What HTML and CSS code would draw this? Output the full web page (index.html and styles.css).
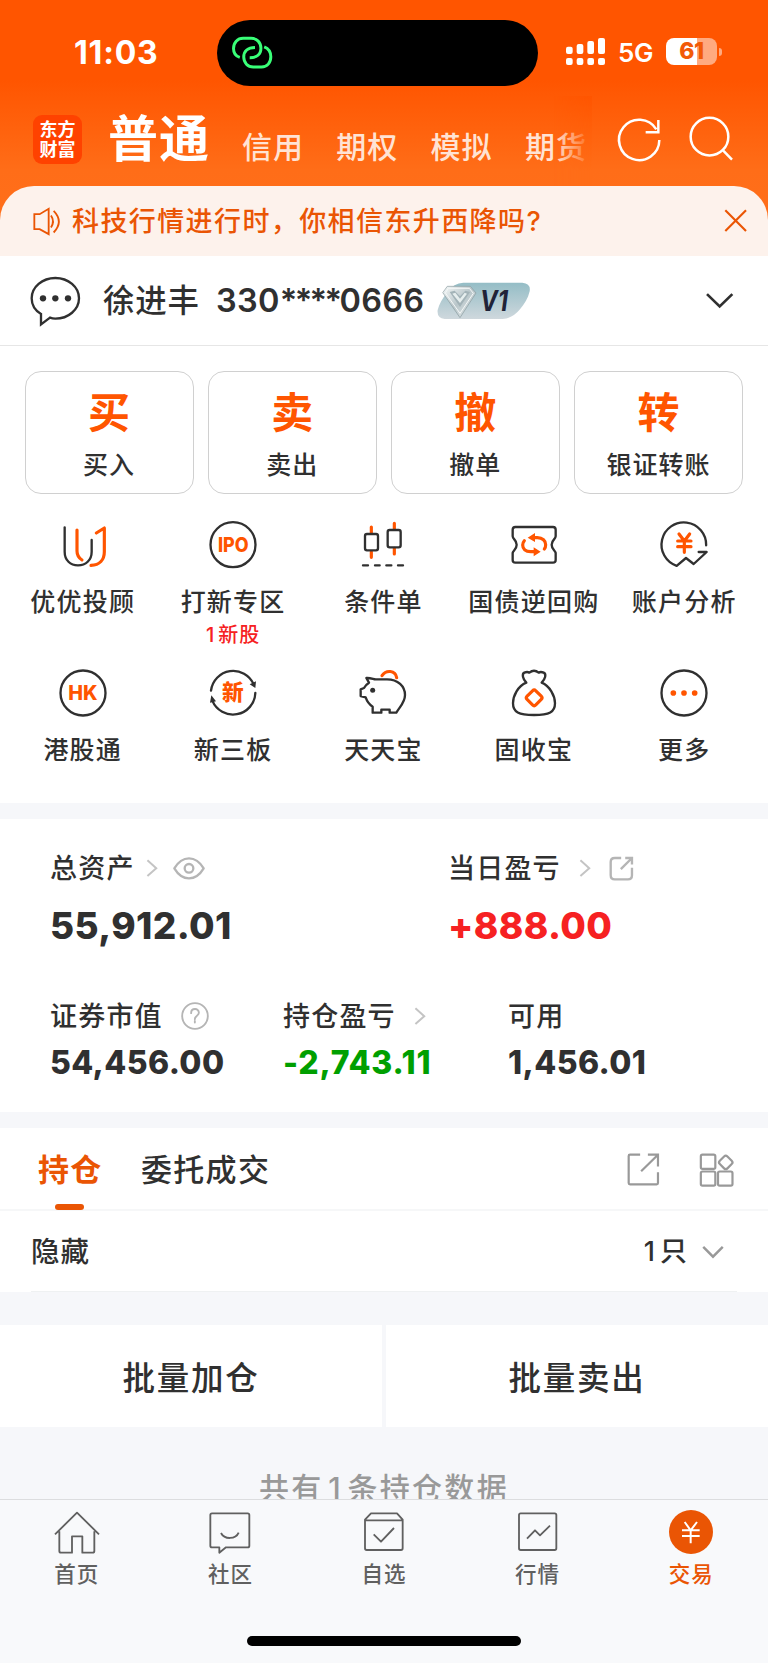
FILE: index.html
```html
<!DOCTYPE html>
<html lang="zh-CN">
<head>
<meta charset="utf-8">
<title>交易</title>
<link rel="stylesheet" href="styles.css">
</head>
<body>
<header class="header">
  <div class="status">
    <span class="time">11:03</span>
    <div class="island">
      <svg class="link-icon" viewBox="692 109 126 100"><path d="M718 174C705 170 699 160 699 147C699 129 711 116 728 116H752C770 116 782 129 782 146C782 164 770 175 748 175M792 142C805 147 812 158 812 172C812 190 801 203 784 203H759C742 203 730 190 730 173C730 155 742 144 764 144"/></svg>
    </div>
    <svg class="signal" viewBox="546 114 117 81">
      <rect x="546" y="174" width="20" height="21" rx="6"/><rect x="578" y="174" width="20" height="21" rx="6"/><rect x="610" y="174" width="20" height="21" rx="6"/><rect x="642" y="174" width="21" height="21" rx="6"/>
      <rect x="546" y="140" width="20" height="22" rx="6"/><rect x="578" y="132" width="20" height="30" rx="6"/><rect x="610" y="123" width="20" height="39" rx="6"/><rect x="642" y="114" width="21" height="48" rx="6"/>
    </svg>
    <span class="net">5G</span>
    <div class="battery">61</div>
    <i class="nub"></i>
  </div>
  <nav class="nav">
    <div class="logo"><span>东方</span><span>财富</span></div>
    <div class="modes">
      <span class="mode-on">普通</span><span>信用</span><span>期权</span><span>模拟</span><span>期货</span>
    </div>
    <svg class="reload" viewBox="699 348 135 141"><path d="M826 420A60.500 60.500 0 1 1 817 388M823 360V397H785"/></svg>
    <svg class="search" viewBox="915 348 135 141"><circle cx="976.500" cy="410" r="56.500"/><path d="M1017 451L1044 479"/></svg>
  </nav>
  <div class="notice">
    <svg class="speaker" viewBox="99 621 84 86"><path d="M103 642H119L146 626V702L119 687H103ZM153 646Q165 664 153 682M161 632Q192 664 161 697"/></svg>
    <span class="notice-text">科技行情进行时，你相信东升西降吗?</span>
    <svg class="close" viewBox="1021 627 70 70"><path d="M1025 631L1088 694M1088 631L1025 694"/></svg>
  </div>
</header>

<section class="account">
  <svg class="chat" viewBox="90 62 150 150"><path d="M150 187L123 207V176C104 165 95 148 95 129C95 95 127 68 166 68S237 95 237 129S205 190 166 190C160 190 155 189 150 187Z"/><g class="dots"><circle cx="129" cy="129" r="9.500"/><circle cx="166" cy="129" r="9.500"/><circle cx="204" cy="129" r="9.500"/></g></svg>
  <span class="name">徐进丰</span>
  <span class="number">330<span class="stars">****</span>0666</span>
  <svg class="badge" viewBox="159 82 279 114">
    <defs>
      <linearGradient id="plate" x1="0" y1="0" x2="0" y2="1"><stop offset="0" stop-color="#94bdc6"/><stop offset="1" stop-color="#cfd8dd"/></linearGradient>
      <linearGradient id="gem" x1="0" y1="0" x2="1" y2="1"><stop offset="0" stop-color="#f5f8f8"/><stop offset=".5" stop-color="#b9c6ca"/><stop offset="1" stop-color="#e8eeee"/></linearGradient>
    </defs>
    <path fill="url(#plate)" d="M238 84H415Q441 86 437 110C432 132 421 148 408 164Q386 191 356 193H182Q158 190 161 166C166 148 175 132 188 115Q210 84 238 84Z"/>
    <path fill="url(#gem)" stroke="#87989d" stroke-width="2" d="M191 95H259L276 115L228 189L177 115Z"/>
    <path fill="none" stroke="#f4f7f7" stroke-width="3" d="M194 101H256L268 116L228 176L185 116Z"/>
    <path fill="#a3b3b8" d="M197 112L212 108L228 125L244 108L258 112L228 157Z"/>
    <path fill="#e6eeee" d="M205 117L214 114L228 132L242 114L249 117L228 145Z"/>
    <text x="288" y="168" class="badge-text" textLength="84" lengthAdjust="spacingAndGlyphs">V1</text>
  </svg>
  <svg class="chevron" viewBox="965 112 87 50"><path d="M971 118L1009 155L1047 118"/></svg>
</section>

<section class="trade">
  <div class="card"><b>买</b><span>买入</span></div>
  <div class="card"><b>卖</b><span>卖出</span></div>
  <div class="card"><b>撤</b><span>撤单</span></div>
  <div class="card"><b>转</b><span>银证转账</span></div>
</section>

<section class="tools">
  <div class="tool">
    <svg viewBox="0 0 144 144"><path d="M17 19V92C17 118 34 133 57 133S98 118 98 92V57"/><path class="hot" d="M54 27V90C54 104 61 112 69 117M112 36L136 21V92C136 116 122 132 96 133"/></svg>
    <span>优优投顾</span>
  </div>
  <div class="tool">
    <svg viewBox="0 0 144 144"><circle cx="72" cy="71" r="67.500"/><text x="27" y="93" textLength="92" lengthAdjust="spacingAndGlyphs">IPO</text></svg>
    <span>打新专区</span><em>1<i></i>新股</em>
  </div>
  <div class="tool">
    <svg viewBox="0 0 144 144"><path class="hot" d="M37 18V36M37 92V109M106 7V24M106 82V99"/><rect x="18" y="39" width="39" height="49" rx="6"/><rect x="86" y="27" width="39" height="52" rx="6"/><path d="M12 133H27M48 133H62M82 133H97M117 133H132"/></svg>
    <span>条件单</span>
  </div>
  <div class="tool">
    <svg viewBox="0 0 144 144"><path d="M16 18H129Q137 18 137 26V46C137 55 125 56 125 71C125 86 137 88 137 97V117Q137 125 129 125H16Q8 125 8 117V97C8 88 20 86 20 71C20 56 8 55 8 46V26Q8 18 16 18Z"/><path class="hot thick" d="M70 50H82C98 50 107 60 107 71Q107 79 103 84M43 59Q38 65 38 72C38 83 46 92 62 92H74"/><path class="fill" d="M53 50L75 36V63ZM92 92L71 79V106Z"/></svg>
    <span>国债逆回购</span>
  </div>
  <div class="tool">
    <svg viewBox="0 0 144 144"><path d="M138.500 73A67 67 0 1 0 50 134.500L78 111L101 129L140 93H116"/><path class="hot thick" d="M57 39L73 60L89 39M73 60V94M53 60H93M53 77H93"/></svg>
    <span>账户分析</span>
  </div>
  <div class="tool">
    <svg viewBox="0 0 144 144"><circle cx="72" cy="72" r="67.500"/><text x="28" y="94" textLength="88" lengthAdjust="spacingAndGlyphs">HK</text></svg>
    <span>港股通</span>
  </div>
  <div class="tool">
    <svg viewBox="0 0 144 144"><path d="M6 65A67 67 0 0 1 134 46M139 72A67 67 0 0 1 10 95"/><path class="dark" d="M122 46L141 37L139 57ZM3 101L7 79L21 97Z"/><text class="cjk" x="39" y="94">新</text></svg>
    <span>新三板</span>
  </div>
  <div class="tool">
    <svg viewBox="0 0 144 144"><path d="M22 27C34 26 42 30 50 31H84C117 31 138 52 138 78C138 100 124 111 112 131H92V122H67V131H41V113Q26 103 20 85L5 81V61L15 57Q19 48 30 41Z"/><circle class="dark" cx="41" cy="64" r="7.500"/><path class="hot thick" d="M69 20C81 2 109 3 113 26"/></svg>
    <span>天天宝</span>
  </div>
  <div class="tool">
    <svg viewBox="0 0 144 144"><path d="M49 41C38 30 35 15 43 11Q52 7 58 11Q72 -1 86 11Q92 7 101 11C110 15 106 30 95 41C119 51 135 80 135 103C135 130 118 138 72 138S9 130 9 103C9 80 24 51 49 41Z"/><rect class="hot thick" x="54" y="68" width="37" height="37" rx="7" transform="rotate(45 72.500 86.500)"/></svg>
    <span>固收宝</span>
  </div>
  <div class="tool">
    <svg viewBox="0 0 144 144"><circle cx="72" cy="72" r="67.500"/><g class="fill"><circle cx="40" cy="72" r="8.500"/><circle cx="72" cy="72" r="8.500"/><circle cx="104" cy="72" r="8.500"/></g></svg>
    <span>更多</span>
  </div>
</section>

<section class="assets">
  <div class="top-row">
    <div class="cell">
      <div class="label">总资产
        <svg class="gt" viewBox="437 207 36 55"><path d="M441 211L468 235L441 259"/></svg>
        <svg class="eye" viewBox="517 201 96 69"><path d="M521 235C545 195 585 195 609 235C585 275 545 275 521 235Z"/><circle cx="565" cy="235" r="13"/></svg>
      </div>
      <div class="big">55,912.01</div>
    </div>
    <div class="cell">
      <div class="label">当日盈亏
        <svg class="gt gt-wide" viewBox="437 207 36 55"><path d="M441 211L468 235L441 259"/></svg>
        <svg class="share" viewBox="677 201 74 74"><path d="M713 207H694Q682 207 682 219V258Q682 270 694 270H733Q745 270 745 258V236M712 240L745 207M725 207H745V226"/></svg>
      </div>
      <div class="big up">+888.00</div>
    </div>
  </div>
  <div class="bottom-row">
    <div class="cell">
      <div class="label">证券市值
        <svg class="help" viewBox="543 636 83 83"><circle cx="584.500" cy="677.500" r="38"/><path d="M573 669C573 653 596 653 596 668C596 677 584 676 584 687M584 692V697"/></svg>
      </div>
      <div class="mid">54,456.00</div>
    </div>
    <div class="cell">
      <div class="label">持仓盈亏
        <svg class="gt gt-wide" viewBox="437 207 36 55"><path d="M441 211L468 235L441 259"/></svg>
      </div>
      <div class="mid down">-2,743.11</div>
    </div>
    <div class="cell">
      <div class="label">可用</div>
      <div class="mid">1,456.01</div>
    </div>
  </div>
</section>

<section class="holdings">
  <div class="tabs">
    <span class="tab tab-on">持仓</span>
    <span class="tab">委托成交</span>
    <svg class="export" viewBox="729 159 98 98"><path d="M768 164H738Q734 164 734 168V248Q734 252 738 252H817Q821 252 821 248V216M771 213L821 164M791 164H821V199"/></svg>
    <svg class="grid-icon" viewBox="946 159 106 101"><rect x="951" y="164" width="43" height="42" rx="5"/><rect x="951" y="214" width="43" height="42" rx="5"/><rect x="1002" y="214" width="43" height="42" rx="5"/><rect x="1009" y="171" width="32" height="32" rx="7" transform="rotate(45 1025 187)"/></svg>
  </div>
  <div class="hidden-row">
    <span>隐藏</span>
    <span class="count">1<i></i>只</span>
    <svg class="fold" viewBox="950 434 72 43"><path d="M956 440L986 470L1016 440"/></svg>
  </div>
</section>

<section class="batch">
  <div>批量加仓</div>
  <div>批量卖出</div>
</section>
<div class="summary">共有<i></i>1<i></i>条持仓数据</div>

<footer class="tabbar">
  <div class="items">
    <div class="item"><svg viewBox="0 0 144 144"><path d="M6 79L72 14L138 79M19 70V129Q19 134 24 134H57V85H88V134H119Q124 134 124 129V70"/></svg><span>首页</span></div>
    <div class="item"><svg viewBox="0 0 144 144"><path d="M18 16H125Q130 16 130 21V113Q130 118 125 118H60L40 134V118H18Q13 118 13 113V21Q13 16 18 16ZM45 75C55 95 89 95 98 74"/></svg><span>社区</span></div>
    <div class="item"><svg viewBox="0 0 144 144"><path d="M33 16H111L128 35V121Q128 126 123 126H20Q15 126 15 121V35ZM15 37H128M41 79L63 101L102 60"/></svg><span>自选</span></div>
    <div class="item"><svg viewBox="0 0 144 144"><path d="M20 16H122Q127 16 127 21V121Q127 126 122 126H20Q15 126 15 121V21Q15 16 20 16ZM39 92L63 67L78 82L108 53"/></svg><span>行情</span></div>
    <div class="item item-on"><svg viewBox="0 0 144 144"><circle cx="72" cy="72" r="66"/><path d="M53 42L71 67L90 42M71 67V106M45 67H98M45 84H98"/></svg><span>交易</span></div>
  </div>
  <div class="home"></div>
</footer>
</body>
</html>
```
FILE: styles.css
```css
* { box-sizing: border-box; }
body {
  margin: 0;
  width: 768px;
  height: 1663px;
  overflow: hidden;
  display: flex;
  flex-direction: column;
  background: #f6f7fa;
  color: #303030;
  font-family: Inter, "Noto Sans CJK SC", sans-serif;
  font-weight: 500;
}
svg { display: block; flex: none; fill: none; overflow: visible; stroke-linecap: round; stroke-linejoin: round; }
span, b, em { white-space: nowrap; }

.header { flex: none; height: 256px; background: linear-gradient(#ff5500 0, #ff5500 80px, #ff6d18 170px, #ff701c 256px); }
.status { display: flex; align-items: center; height: 106px; color: #fff; }
.time { flex: none; width: 217px; margin-top: -2px; padding-left: 74px; font-size: 32px; font-weight: 700; letter-spacing: .8px; }
.island { flex: none; width: 321px; height: 66px; border-radius: 33px; background: #000; padding: 16px 14px; }
.link-icon { width: 42px; height: 33px; stroke: #39ff78; stroke-width: 9; stroke-linecap: butt; }
.signal { width: 39px; height: 27px; margin: -3px 0 0 28px; fill: #fff; }
.net { flex: none; width: 61px; margin-top: -1px; padding-left: 13px; font-size: 26px; font-weight: 600; letter-spacing: -.3px; }
.battery { flex: none; width: 51px; height: 27px; margin-top: -3px; border-radius: 8px; background: linear-gradient(90deg, #fff 61%, #ffaa80 61%); color: #f25a08; font-size: 23px; line-height: 27px; font-weight: 800; text-align: center; letter-spacing: -.5px; }
.nub { flex: none; width: 3px; height: 8px; margin: -3px 0 0 2px; border-radius: 0 4px 4px 0; background: #ffaa80; }

.nav { display: flex; align-items: center; height: 80px; padding-left: 33px; }
.logo { width: 49px; height: 49px; margin-top: -13px; border-radius: 9px; background: #ff4200; color: #fff; display: flex; flex-direction: column; align-items: center; justify-content: center; font-size: 18px; line-height: 20px; font-weight: 700; }
.modes { position: relative; display: flex; width: 510px; height: 90px; padding-left: 26px; margin-top: -10px; overflow: hidden; font-size: 30px; line-height: 102px; letter-spacing: 1px; color: #ffe3d4; }
.modes span { width: 94.300px; flex: none; }
.modes .mode-on { width: 134px; font-size: 50px; line-height: 87px; font-weight: 700; color: #fff; }
.modes::after { content: ""; position: absolute; right: 0; top: 0; width: 38px; height: 90px; background: linear-gradient(#ff5500, #ff6d18 75px); -webkit-mask-image: linear-gradient(90deg, transparent, #000); mask-image: linear-gradient(90deg, transparent, #000); }
.reload, .search { width: 45px; height: 47px; margin-top: -13px; stroke: #fff; stroke-width: 7.500; stroke-linecap: butt; stroke-linejoin: miter; }
.reload { margin-left: 25px; }
.search { margin-left: 27px; }
.notice { display: flex; align-items: center; height: 70px; padding: 2px 21px 0 33px; border-radius: 34px 34px 0 0; background: #fdf2ec; color: #ea5504; }
.speaker { width: 28px; height: 29px; margin-top: -2px; stroke: #ea5504; stroke-width: 5.500; stroke-linecap: butt; stroke-linejoin: miter; }
.notice-text { margin-left: 11px; flex: 1; font-size: 27px; letter-spacing: 1.4px; line-height: 40px; }
.close { width: 23px; height: 23px; margin-top: -3px; stroke: #ea5504; stroke-width: 6.500; stroke-linecap: butt; }

.account { flex: none; display: flex; align-items: center; height: 90px; padding-left: 30px; border-bottom: 1px solid #e6e6e6; background: #fff; }
.chat { width: 50px; height: 50px; stroke: #303030; stroke-width: 7; stroke-linejoin: miter; }
.dots { fill: #303030; stroke: none; }
.name { margin-left: 23px; width: 113px; font-size: 31.500px; letter-spacing: .8px; line-height: 44px; }
.number { width: 221px; font-size: 32.500px; line-height: 44px; letter-spacing: .3px; font-weight: 600; }
.stars { letter-spacing: -2.600px; }
.badge { width: 93px; height: 38px; }
.badge-text { font: italic 700 84px Inter, sans-serif; fill: #1f2338; }
.chevron { width: 29px; height: 17px; margin-left: 175px; stroke: #303030; stroke-width: 8; stroke-linecap: butt; stroke-linejoin: miter; }

.trade { flex: none; display: grid; grid-template-columns: repeat(4, 1fr); gap: 14px; height: 148px; padding: 25px 25px 0 24.500px; background: #fff; }
.card { height: 123px; border: 1px solid #d0d0d0; border-radius: 16px; display: flex; flex-direction: column; align-items: center; }
.card b { margin-top: 15px; font-size: 42px; line-height: 52px; font-weight: 700; color: #ff5500; }
.card span { margin-top: 8px; font-size: 25px; line-height: 36px; letter-spacing: 1px; }

.tools { flex: none; display: grid; grid-template-columns: repeat(5, 150.400px); grid-template-rows: 147.500px 1fr; height: 309px; padding: 27px 8px 0 7.500px; background: #fff; }
.tool { display: flex; flex-direction: column; align-items: center; font-size: 25px; line-height: 36px; letter-spacing: 1.200px; }
.tool svg { width: 48px; height: 48px; stroke: #303030; stroke-width: 7; }
.tool span { margin-top: 15px; }
.tool em { font-size: 20px; line-height: 28px; font-style: normal; color: #f62122; margin-top: 1px; letter-spacing: 1px; }
.tool em i { display: inline-block; width: 3px; }
.tool .hot { stroke: #ff5500; stroke-width: 9.500; }
.tool .thick { stroke-width: 9.500; }
.tool .fill { fill: #ff5500; stroke: none; }
.tool .dark { fill: #303030; stroke: none; }
.tool text { font: 800 60px Inter, sans-serif; fill: #ff5500; stroke: none; letter-spacing: 0; }
.tool .cjk { font: 900 65px "Noto Sans CJK SC", sans-serif; }

.assets { flex: none; margin: 16px 0; height: 293px; padding: 30px 0 0 50px; background: #fff; }
.top-row { display: grid; grid-template-columns: 398px 1fr; height: 148px; }
.bottom-row { display: grid; grid-template-columns: 233px 225px 1fr; }
.label { display: flex; align-items: center; font-size: 27px; line-height: 40px; letter-spacing: 1.200px; }
.label svg { margin-top: -2px; }
.gt { width: 12px; height: 18px; margin-left: 11px; stroke: #c4c4c4; stroke-width: 6; stroke-linecap: butt; stroke-linejoin: miter; }
.gt-wide { margin-left: 18px; }
.eye { width: 32px; height: 23px; margin-left: 15px; stroke: #b5b5b5; stroke-width: 7; }
.share { width: 25px; height: 25px; margin-left: 18px; stroke: #b5b5b5; stroke-width: 7; stroke-linecap: butt; stroke-linejoin: miter; }
.help { width: 28px; height: 28px; margin-left: 18px; stroke: #b5b5b5; stroke-width: 5.500; }
.big { margin-top: 14px; font-size: 37px; line-height: 46px; font-weight: 800; letter-spacing: .4px; }
.mid { margin-top: 6px; font-size: 32px; line-height: 40px; font-weight: 800; letter-spacing: .4px; }
.up { color: #f62122; }
.down { color: #009f00; letter-spacing: .8px; }

.holdings { flex: none; height: 164px; background: #fff; }
.tabs { display: flex; align-items: center; height: 83px; padding-left: 38px; border-bottom: 2px solid #f6f7f8; font-size: 31px; letter-spacing: 1.300px; }
.tab { height: 83px; line-height: 85px; width: 486px; }
.tab-on { position: relative; width: 103px; font-weight: 700; color: #ea5504; }
.tab-on::after { content: ""; position: absolute; left: 17px; bottom: 0; width: 29px; height: 6px; border-radius: 3px; background: #ea5504; }
.export { width: 33px; height: 33px; margin-top: 2px; stroke: #999; stroke-width: 6.500; stroke-linecap: butt; stroke-linejoin: miter; }
.grid-icon { width: 36px; height: 34px; margin: 2px 0 0 39px; stroke: #999; stroke-width: 6.500; }
.hidden-row { display: flex; align-items: center; height: 81px; margin: 0 31px; padding-bottom: 4px; border-bottom: 1px solid #eff1f2; font-size: 28.500px; letter-spacing: 1px; }
.count { margin-left: auto; font-size: 27px; letter-spacing: 1px; }
.count i { display: inline-block; width: 4px; }
.fold { width: 24px; height: 14px; margin: 6px 12px 0 13px; stroke: #999; stroke-width: 7.500; stroke-linecap: butt; stroke-linejoin: miter; }
.batch { flex: none; display: grid; grid-template-columns: 382px 382px; gap: 4px; margin-top: 33px; }
.batch div { height: 102px; line-height: 107px; background: #fff; text-align: center; font-size: 32.500px; letter-spacing: 1.800px; }
.summary { flex: none; height: 72px; padding-top: 39px; overflow: hidden; text-align: center; font-size: 30px; line-height: 44px; letter-spacing: 2.300px; color: #999; }
.summary i { display: inline-block; width: 4.500px; }

.tabbar { flex: none; height: 164px; border-top: 1px solid #dcdddf; background: #f8f9fb; }
.items { display: grid; grid-template-columns: repeat(5, 1fr); height: 136px; padding-top: 8px; }
.item { display: flex; flex-direction: column; align-items: center; font-size: 21.500px; line-height: 30px; letter-spacing: 1px; color: #606060; }
.item svg { width: 48px; height: 48px; stroke: #606060; stroke-width: 5.500; stroke-linecap: butt; }
.item span { margin-top: 3px; }
.item-on { color: #ea5504; }
.item-on circle { fill: #ea5504; stroke: none; }
.item-on path { stroke: #fff; stroke-width: 6; }
.home { width: 274px; height: 10px; margin: 0 auto; border-radius: 5px; background: #000; }
```
